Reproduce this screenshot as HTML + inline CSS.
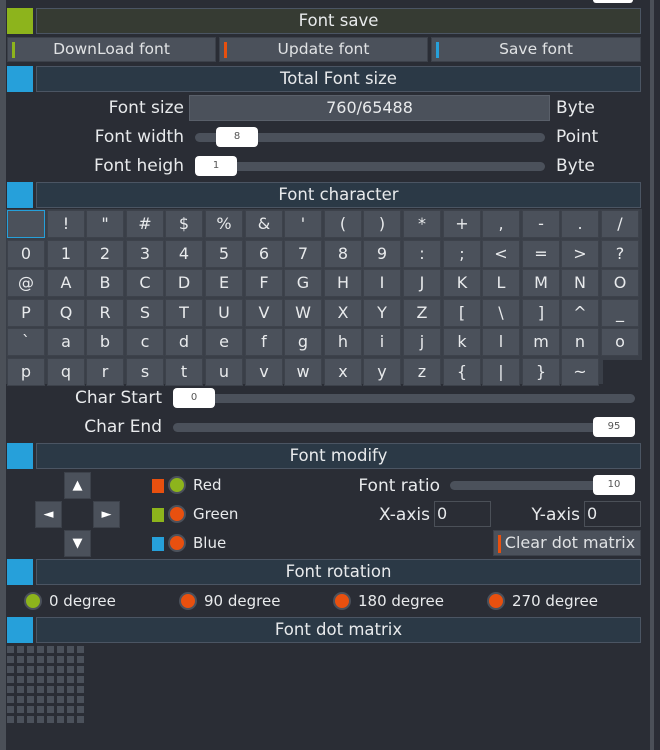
<!DOCTYPE html>
<html><head><meta charset="utf-8"><style>
*{margin:0;padding:0;box-sizing:border-box}
body{width:660px;height:750px;background:#2a2d35;position:relative;overflow:hidden;font-family:"DejaVu Sans","Liberation Sans",sans-serif;color:#e8eaec;font-size:16px}
.a{position:absolute}
.sq{position:absolute;left:7px;width:26px;height:26px}
.hd{position:absolute;left:36px;width:605px;height:26px;background:#2b3946;border:1px solid #4b5563;text-align:center;font-size:16.5px;line-height:24px}
.btn{position:absolute;height:25px;background:#4b515b;border:1px solid #3c414a;text-align:center;line-height:23px;font-size:15.5px;color:#e0e2e4}
.strip{position:absolute;left:4px;top:4px;width:3px;height:16px}
.lbl{position:absolute;text-align:right;font-size:17px;line-height:22px}
.trk{position:absolute;height:9px;background:#4b515b;border-radius:5px}
.hdl{position:absolute;width:42px;height:20px;background:#fff;border-radius:4px;color:#555;font-size:10px;text-align:center;line-height:20px}
.cell{position:absolute;width:38px;height:28px;background:#4b515b;border:1px solid #3d424b;text-align:center;line-height:26px;font-size:16px;color:#e8eaec}
.dot{position:absolute;width:18px;height:18px;border-radius:50%;border:2px solid #4b515b}
.pad{position:absolute;width:27px;height:27px;background:#4b515b;border:1px solid #3d424b;color:#fff;text-align:center;line-height:25px;font-size:13px}
.in{position:absolute;height:26px;border:1px solid #4b5058;background:#2a2d35;font-size:16px;line-height:24px;padding-left:2px}
.m{position:absolute;width:7px;height:7px;background:#4b515b}
</style></head><body>
<div class="a" style="left:0;top:0;width:6px;height:750px;background:#4b5058"></div>
<div class="a" style="left:650px;top:0;width:4px;height:750px;background:#4b5058"></div>
<div class="a" style="left:593px;top:0;width:40px;height:3px;background:#fff;border-radius:0 0 3px 3px"></div>

<div class="sq" style="top:8px;background:#8db41c"></div>
<div class="hd" style="top:8px;background:#363b33">Font save</div>
<div class="btn" style="left:7px;top:37px;width:209px"><span class="strip" style="background:#8db41c"></span>DownLoad font</div>
<div class="btn" style="left:219px;top:37px;width:209px"><span class="strip" style="background:#e8500f"></span>Update font</div>
<div class="btn" style="left:431px;top:37px;width:210px"><span class="strip" style="background:#26a0da"></span>Save font</div>

<div class="sq" style="top:66px;background:#26a0da"></div>
<div class="hd" style="top:66px">Total Font size</div>
<div class="lbl" style="left:40px;width:144px;top:97px">Font size</div>
<div class="a" style="left:189px;top:95px;width:361px;height:26px;background:#4b515b;border:1px solid #5a606a;text-align:center;line-height:24px;font-size:16px">760/65488</div>
<div class="a" style="left:556px;top:97px;font-size:17px;line-height:22px">Byte</div>
<div class="lbl" style="left:40px;width:144px;top:126px">Font width</div>
<div class="trk" style="left:195px;top:133px;width:350px"></div>
<div class="hdl" style="left:216px;top:127px">8</div>
<div class="a" style="left:556px;top:126px;font-size:17px;line-height:22px">Point</div>
<div class="lbl" style="left:40px;width:144px;top:155px">Font heigh</div>
<div class="trk" style="left:195px;top:162px;width:350px"></div>
<div class="hdl" style="left:195px;top:156px">1</div>
<div class="a" style="left:556px;top:155px;font-size:17px;line-height:22px">Byte</div>

<div class="sq" style="top:182px;background:#26a0da"></div>
<div class="hd" style="top:182px">Font character</div>
<div class="a" style="left:6px;top:209px;width:636px;height:151px;background:#3a3f48"></div>
<div class="a" style="left:6px;top:359px;width:597px;height:25px;background:#3a3f48"></div>
<div id="g"></div>
<div class="a" style="left:7px;top:210px;width:38px;height:28px;border:1px solid #26a0da;background:#4b515b"></div>

<div class="lbl" style="left:20px;width:142px;top:387px">Char Start</div>
<div class="trk" style="left:173px;top:394px;width:462px"></div>
<div class="hdl" style="left:173px;top:388px">0</div>
<div class="lbl" style="left:20px;width:142px;top:416px">Char End</div>
<div class="trk" style="left:173px;top:423px;width:462px"></div>
<div class="hdl" style="left:593px;top:417px">95</div>

<div class="sq" style="top:443px;background:#26a0da"></div>
<div class="hd" style="top:443px">Font modify</div>
<div class="pad" style="left:64px;top:472px">▲</div>
<div class="pad" style="left:35px;top:501px">◄</div>
<div class="pad" style="left:93px;top:501px">►</div>
<div class="pad" style="left:64px;top:530px">▼</div>
<div class="a" style="left:152px;top:479px;width:12px;height:14px;background:#e8500f"></div>
<div class="dot" style="left:168px;top:476px;background:#8db41c"></div>
<div class="a" style="left:193px;top:475px;font-size:15px;line-height:20px">Red</div>
<div class="a" style="left:152px;top:508px;width:12px;height:14px;background:#8db41c"></div>
<div class="dot" style="left:168px;top:505px;background:#e8500f"></div>
<div class="a" style="left:193px;top:504px;font-size:15px;line-height:20px">Green</div>
<div class="a" style="left:152px;top:537px;width:12px;height:14px;background:#26a0da"></div>
<div class="dot" style="left:168px;top:534px;background:#e8500f"></div>
<div class="a" style="left:193px;top:533px;font-size:15px;line-height:20px">Blue</div>
<div class="lbl" style="left:300px;width:140px;top:475px">Font ratio</div>
<div class="trk" style="left:450px;top:481px;width:185px"></div>
<div class="hdl" style="left:593px;top:475px">10</div>
<div class="lbl" style="left:300px;width:130px;top:504px">X-axis</div>
<div class="in" style="left:434px;top:501px;width:57px">0</div>
<div class="lbl" style="left:480px;width:100px;top:504px">Y-axis</div>
<div class="in" style="left:584px;top:501px;width:57px">0</div>
<div class="btn" style="left:493px;top:530px;width:148px;height:26px;font-size:16px;line-height:24px;padding-left:6px"><span class="strip" style="background:#e8500f;top:4px;height:18px"></span>Clear dot matrix</div>

<div class="sq" style="top:559px;background:#26a0da"></div>
<div class="hd" style="top:559px">Font rotation</div>
<div class="dot" style="left:24px;top:592px;background:#8db41c"></div>
<div class="a" style="left:49px;top:591px;font-size:15px;line-height:20px">0 degree</div>
<div class="dot" style="left:179px;top:592px;background:#e8500f"></div>
<div class="a" style="left:204px;top:591px;font-size:15px;line-height:20px">90 degree</div>
<div class="dot" style="left:333px;top:592px;background:#e8500f"></div>
<div class="a" style="left:358px;top:591px;font-size:15px;line-height:20px">180 degree</div>
<div class="dot" style="left:487px;top:592px;background:#e8500f"></div>
<div class="a" style="left:512px;top:591px;font-size:15px;line-height:20px">270 degree</div>

<div class="sq" style="top:617px;background:#26a0da"></div>
<div class="hd" style="top:617px">Font dot matrix</div>
<div id="d"></div>
<script>
var c=[" !\"#$%&'()*+,-./","0123456789:;<=>?","@ABCDEFGHIJKLMNO","PQRSTUVWXYZ[\\]^_","`abcdefghijklmno","pqrstuvwxyz{|}~"];
var h="";
for(var r=0;r<6;r++){for(var i=0;i<c[r].length;i++){var ch=c[r][i];ch=ch.replace("&","&amp;").replace("<","&lt;").replace(">","&gt;");h+='<div class="cell" style="left:'+(7+Math.round(i*39.6))+'px;top:'+(210+r*29.6)+'px">'+ch+'</div>';}}
document.getElementById("g").innerHTML=h;
var d="";for(var y=0;y<8;y++)for(var x=0;x<8;x++)d+='<div class="m" style="left:'+(7+x*10)+'px;top:'+(646+y*10)+'px"></div>';
document.getElementById("d").innerHTML=d;
</script>
</body></html>
